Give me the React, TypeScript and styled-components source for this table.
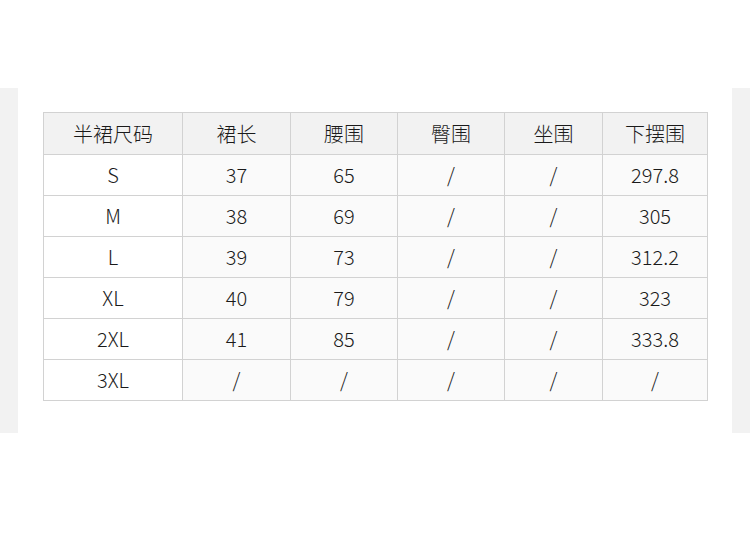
import React from "react";
import styled, { createGlobalStyle } from "styled-components";

const GlobalStyle = createGlobalStyle`
    body {
        margin: 0;
        background: #fff;
        font-family: "Noto Sans CJK SC", "Noto Sans", sans-serif;
    }
`;

// layout
const Page = styled.div`
    padding-top: 88px;
    display: flex;
    width: 750px;
    height: 551px;
    box-sizing: border-box;
    align-items: flex-start;
`;

const Strip = styled.div`
    width: 18px;
    height: 345px;
    background: #f2f2f2;
    flex-shrink: 0;
`;

const Main = styled.div`
    flex: 1;
    padding: 24px 0 0 25px;
`;

const Grid = styled.div`
    display: grid;
    grid-template-columns: 139px 108px 107px 107px 98px 105px;
    grid-auto-rows: 41px;
    grid-template-rows: 42px;
    width: max-content;
    border-top: 1px solid #d2d2d2;
    border-left: 1px solid #d2d2d2;
`;

const Cell = styled.div<{ $head?: boolean; $tint?: boolean }>`
    display: flex;
    align-items: center;
    justify-content: center;
    border-right: 1px solid #d2d2d2;
    border-bottom: 1px solid #d2d2d2;
    background: ${(p) => (p.$head ? "#f2f2f2" : p.$tint ? "#fafafa" : "#fff")};
    color: #1a1a1a;
    font-size: 20px;
    font-weight: 300;
    line-height: 1;
`;

const headers = ["半裙尺码", "裙长", "腰围", "臀围", "坐围", "下摆围"];

const rows = [
    ["S", "37", "65", "/", "/", "297.8"],
    ["M", "38", "69", "/", "/", "305"],
    ["L", "39", "73", "/", "/", "312.2"],
    ["XL", "40", "79", "/", "/", "323"],
    ["2XL", "41", "85", "/", "/", "333.8"],
    ["3XL", "/", "/", "/", "/", "/"],
];

const App: React.FC = () => {
    return (
        <>
            <GlobalStyle />
            <Page>
                <Strip />
                <Main>
                    <Grid>
                        {headers.map((h) => (
                            <Cell key={h} $head>
                                {h}
                            </Cell>
                        ))}
                        {rows.map((r, i) =>
                            r.map((v, j) => (
                                <Cell key={`${i}-${j}`} $tint={j > 0}>
                                    {v}
                                </Cell>
                            ))
                        )}
                    </Grid>
                </Main>
                <Strip />
            </Page>
        </>
    );
};

export default App;
